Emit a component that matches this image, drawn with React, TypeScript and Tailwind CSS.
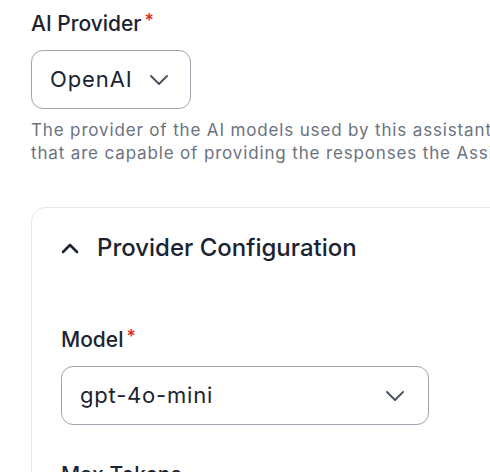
import React from "react";

function ChevronDown({ className }: { className?: string }) {
  return (
    <svg className={className} width="20" height="12" viewBox="0 0 20 12" fill="none" stroke="currentColor" strokeWidth="2" strokeLinecap="round" strokeLinejoin="round">
      <path d="M2 2 L10 10 L18 2" />
    </svg>
  );
}

function ChevronUp({ className }: { className?: string }) {
  return (
    <svg className={className} width="18" height="12" viewBox="0 0 18 12" fill="none" stroke="currentColor" strokeWidth="2.6" strokeLinecap="round" strokeLinejoin="round">
      <path d="M2 10 L9 3 L16 10" />
    </svg>
  );
}

function Label({ children }: { children: React.ReactNode }) {
  return (
    <div className="flex items-start text-[21px] leading-[30px] font-medium text-[#1c2330]">
      <span>{children}</span>
      <span className="ml-[3px] text-[18px] leading-[24px] text-[#dc2626]">*</span>
    </div>
  );
}

export default function App() {
  return (
    <div
      className="w-[490px] h-[472px] overflow-hidden bg-white pl-[31px] pt-[9px]"
      style={{ fontFamily: "Inter, 'Noto Sans', sans-serif" }}
    >
      <Label>AI Provider</Label>
      <div className="mt-[11px] inline-flex h-[59px] w-[160px] items-center justify-between rounded-[12px] border border-[#9ca3af] pl-[18px] pr-[21px]">
        <span className="text-[22px] tracking-[0.9px] text-[#1c2330]">OpenAI</span>
        <ChevronDown className="text-[#4b5563]" />
      </div>
      <div className="mt-[10px] w-[700px] text-[17px] leading-[23px] tracking-[0.85px] text-[#6b7280] whitespace-nowrap">
        <div>The provider of the AI models used by this assistant. Choose a provider with models</div>
        <div>that are capable of providing the responses the Assistant needs.</div>
      </div>
      <div className="mt-[42px] w-[700px] rounded-tl-[14px] rounded-tr-[14px] border border-[#e5e7eb] px-[29px] pt-[24px] pb-[40px]">
        <div className="flex items-center gap-[18px]">
          <ChevronUp className="text-[#1c2330]" />
          <span className="text-[24px] leading-[32px] font-medium text-[#1c2330]">Provider Configuration</span>
        </div>
        <div className="mt-[61px]">
          <Label>Model</Label>
          <div className="mt-[11px] flex h-[59px] w-[368px] items-center justify-between rounded-[12px] border border-[#9ca3af] pl-[18px] pr-[23px]">
            <span className="text-[22px] tracking-[0.8px] text-[#1c2330]">gpt-4o-mini</span>
            <ChevronDown className="text-[#4b5563]" />
          </div>
        </div>
        <div className="mt-[35px]">
          <div className="text-[21px] leading-[30px] font-medium text-[#1c2330]">Max Tokens</div>
        </div>
      </div>
    </div>
  );
}
